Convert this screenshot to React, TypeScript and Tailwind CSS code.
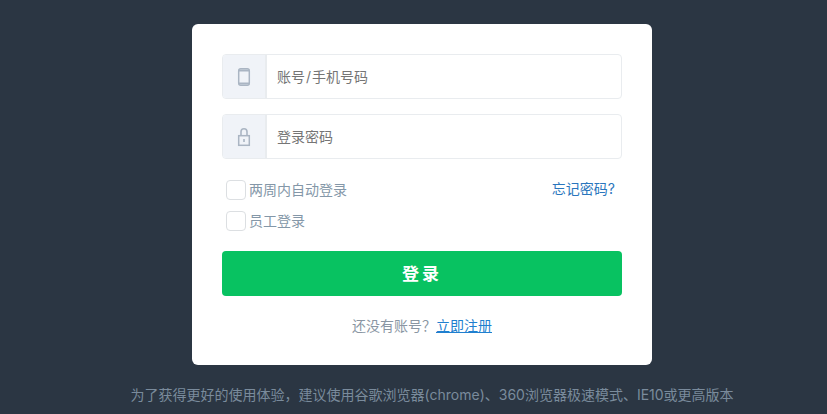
import React from "react";

function Field({ icon, text }: { icon: React.ReactNode; text: React.ReactNode }) {
  return (
    <div className="flex h-[45px] rounded-[4px] border border-[#e9ecef] overflow-hidden">
      <div className="flex w-[44px] shrink-0 items-center justify-center border-r-2 border-[#e9ecef] bg-[#f0f3f8]">{icon}</div>
      <div className="flex flex-1 items-center pl-[10px] text-[14px] text-[#757575]">{text}</div>
    </div>
  );
}

function Check({ text }: { text: string }) {
  return (
    <div className="flex items-center">
      <span className="h-[20px] w-[20px] rounded-[4px] border border-[#dcdfe2] bg-white" />
      <span className="ml-[3px] text-[14px] leading-[20px] text-[#8497a8]">{text}</span>
    </div>
  );
}

export default function App() {
  return (
    <div className="flex h-[414px] w-[827px] flex-col items-center overflow-hidden bg-[#2b3643] pt-[24px] font-['Inter','Noto_Sans_CJK_SC',sans-serif]">
      <div className="ml-[17px] flex h-[341px] w-[460px] flex-col rounded-[6px] bg-white px-[30px] pt-[30px]">
        <div className="flex flex-col gap-[15px]">
          <Field
            text={
              <>
                账号<span className="px-[1px]">/</span>手机号码
              </>
            }
            icon={
              <svg width="14" height="20" viewBox="0 0 14 20" fill="none">
                <rect x="1.7" y="1.7" width="10.6" height="16.6" rx="2" stroke="#aab5c3" strokeWidth="1.5" />
                <path d="M2 3.5h10M2 16.5h10" stroke="#aab5c3" strokeWidth="2" />
              </svg>
            }
          />
          <Field
            text="登录密码"
            icon={
              <svg width="14" height="20" viewBox="0 0 14 20" fill="none">
                <rect x="1.7" y="8.7" width="10.6" height="9.6" stroke="#aab5c3" strokeWidth="1.5" />
                <path d="M4 8.5V4.8a3 3 0 0 1 6 0V8.5" stroke="#aab5c3" strokeWidth="1.6" />
                <rect x="6.2" y="12" width="1.6" height="3" fill="#aab5c3" />
              </svg>
            }
          />
        </div>
        <div className="mt-[21px] flex items-start justify-between pl-[4px] pr-[7px]">
          <div className="flex flex-col gap-[11px]">
            <Check text="两周内自动登录" />
            <Check text="员工登录" />
          </div>
          <a className="-mt-[1px] text-[14px] leading-[20px] text-[#2a76bd]">忘记密码?</a>
        </div>
        <button className="mt-[20px] h-[45px] w-full rounded-[4px] bg-[#08c261] pt-[2px] text-[17px] font-bold tracking-[3px] text-white">登录</button>
        <div className="mt-[20px] text-center text-[14px] leading-[20px] text-[#8a96a3]">
          还没有账号？<a className="text-[#1f7fcf] underline">立即注册</a>
        </div>
      </div>
      <div className="ml-[37px] mt-[20px] text-center text-[14px] leading-[20px] text-[#7a8b9c]">
        为了获得更好的使用体验，建议使用谷歌浏览器(chrome)、360浏览器极速模式、IE10或更高版本
      </div>
    </div>
  );
}
